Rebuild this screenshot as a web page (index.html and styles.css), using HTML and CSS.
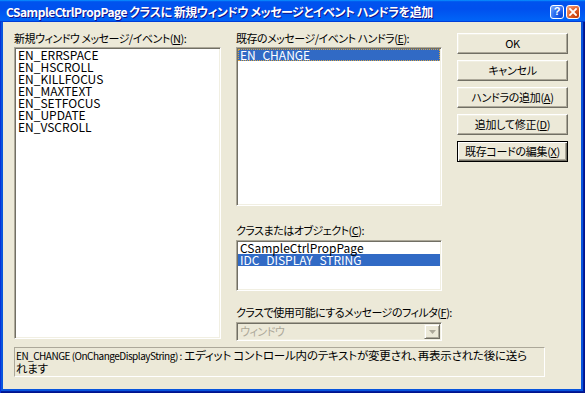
FILE: index.html
```html
<!DOCTYPE html>
<html lang="ja">
<head>
<meta charset="utf-8">
<title>CSampleCtrlPropPage</title>
<link rel="stylesheet" href="styles.css">
</head>
<body>
<div class="window">
  <div class="titlebar">
    <span class="title">CSampleCtrlPropPage クラスに 新規ウィンドウ メッセージとイベント ハンドラを追加</span>
    <div class="caption-buttons">
      <div class="cap-btn help">?</div>
      <div class="cap-btn close">
        <svg width="8" height="8" viewBox="0 0 8 8"><path d="M1 1 L7 7 M7 1 L1 7" stroke="#fff" stroke-width="1.8" stroke-linecap="square"/></svg>
      </div>
    </div>
  </div>
  <div class="client">
    <div class="main">
      <div class="col">
        <div class="label">新規ウィンドウ メッセージ/イベント(<u>N</u>):</div>
        <div class="listbox list-new">
          <div class="item">EN_ERRSPACE</div>
          <div class="item">EN_HSCROLL</div>
          <div class="item">EN_KILLFOCUS</div>
          <div class="item">EN_MAXTEXT</div>
          <div class="item">EN_SETFOCUS</div>
          <div class="item">EN_UPDATE</div>
          <div class="item">EN_VSCROLL</div>
        </div>
      </div>
      <div class="col">
        <div class="label">既存のメッセージ/イベント ハンドラ(<u>E</u>):</div>
        <div class="listbox list-existing">
          <div class="item selected focused">EN_CHANGE</div>
        </div>
        <div class="label label-class">クラスまたはオブジェクト(<u>C</u>):</div>
        <div class="listbox list-class">
          <div class="item">CSampleCtrlPropPage</div>
          <div class="item selected">IDC_DISPLAY_STRING</div>
        </div>
        <div class="label label-filter">クラスで使用可能にするメッセージのフィルタ(<u>F</u>):</div>
        <div class="combo">
          <span class="combo-text">ウィンドウ</span>
          <span class="combo-btn">
            <svg width="7" height="4" viewBox="0 0 7 4"><path d="M0 0 H7 L3.5 4 Z" fill="#aca899"/></svg>
          </span>
        </div>
      </div>
      <div class="col buttons">
        <div class="btn">OK</div>
        <div class="btn">キャンセル</div>
        <div class="btn">ハンドラの追加(<u>A</u>)</div>
        <div class="btn">追加して修正(<u>D</u>)</div>
        <div class="btn default">既存コードの編集(<u>X</u>)</div>
      </div>
    </div>
    <div class="status"><span class="status-code">EN_CHANGE (OnChangeDisplayString) :</span> エディット コントロール内のテキストが変更され、再表示された後に送ら<br>れます</div>
  </div>
</div>
</body>
</html>
```

FILE: styles.css
```css
* { box-sizing: border-box; }
html, body { margin: 0; padding: 0; }
body {
  width: 585px;
  height: 393px;
  overflow: hidden;
  font-family: "Noto Sans CJK JP", "Noto Sans", sans-serif;
  font-size: 12px;
  font-feature-settings: "palt";
  color: #000;
  background: #fff;
}
.window {
  width: 585px;
  height: 393px;
  display: flex;
  flex-direction: column;
  background: #0855dd;
  box-shadow: inset 1px 0 #0831d9, inset -1px -1px #00138c, inset -2px -2px #001ea0;
}
.titlebar {
  height: 22px;
  flex: none;
  display: flex;
  align-items: center;
  justify-content: space-between;
  padding: 0 5px 0 6px;
  background: linear-gradient(180deg, #0997ff, #0053ee 8%, #0050ee 40%, #0062f6 88%, #0062f6 93%, #005bff 95%, #003dd7 96%, #003dd7);
}
.title {
  color: #fff;
  font-weight: bold;
  font-size: 12px;
  letter-spacing: -0.5px;
  line-height: 16px;
  margin-top: 1px;
  white-space: nowrap;
  text-shadow: 1px 1px #0f1089;
}
.caption-buttons {
  display: flex;
  gap: 2px;
  margin-top: 1px;
}
.cap-btn {
  width: 14px;
  height: 14px;
  border: 1px solid #fff;
  border-radius: 3px;
  display: flex;
  align-items: center;
  justify-content: center;
  color: #fff;
  font-weight: bold;
  font-size: 11px;
  line-height: 1;
  font-family: "Liberation Sans", sans-serif;
}
.help {
  background: radial-gradient(circle at 85% 85%, #0a47d6 0%, #2a6cf2 50%, #83b1fb 100%);
}
.close {
  background: radial-gradient(circle at 85% 85%, #c23a05 0%, #e0602a 50%, #f4ad8d 100%);
}
.client {
  flex: 1;
  margin: 0 4px 4px 3px;
  background: #ece9d8;
  padding: 10px 13px 12px 11px;
  display: flex;
  flex-direction: column;
  gap: 6px;
}
.main {
  height: 309px;
  display: grid;
  grid-template-columns: 207px 206px 111px;
  column-gap: 15px;
}
.col {
  display: flex;
  flex-direction: column;
}
.label {
  font-size: 11px;
  letter-spacing: -0.5px;
  line-height: 13px;
  height: 13px;
  margin-bottom: 2px;
  white-space: nowrap;
}
.label u { text-underline-offset: 1px; }
.label-class { margin-top: 18px; margin-bottom: 3px; }
.label-filter { margin-top: 15px; margin-bottom: 3px; }
.listbox {
  background: #fff;
  border: 1px solid;
  border-color: #aca899 #fff #fff #aca899;
  box-shadow: inset 1px 1px #716f64, inset -1px -1px #f1efe2;
  padding: 1px;
  overflow: hidden;
}
.list-new { height: 292px; }
.list-existing { height: 159px; }
.list-class { height: 51px; }
.item {
  height: 12px;
  line-height: 12px;
  padding-left: 2px;
  white-space: nowrap;
}
.selected {
  background: #316ac5;
  color: #fff;
}
.focused {
  outline: 1px dotted #d9a441;
  outline-offset: -1px;
}
.combo {
  height: 19px;
  display: flex;
  align-items: stretch;
  background: #ece9d8;
  border: 1px solid;
  border-color: #aca899 #fff #fff #aca899;
  box-shadow: inset 1px 1px #716f64, inset -1px -1px #f1efe2;
  padding: 1px;
}
.combo-text {
  flex: 1;
  color: #aca899;
  font-size: 11px;
  letter-spacing: -0.5px;
  line-height: 15px;
  padding-left: 2px;
}
.combo-btn {
  width: 16px;
  display: flex;
  align-items: center;
  justify-content: center;
  background: #ece9d8;
  border: 1px solid;
  border-color: #f1efe2 #716f64 #716f64 #f1efe2;
  box-shadow: inset 1px 1px #fff, inset -1px -1px #aca899;
}
.buttons {
  padding-top: 1px;
  gap: 6px;
}
.btn {
  height: 21px;
  display: flex;
  align-items: center;
  justify-content: center;
  white-space: nowrap;
  background: #ece9d8;
  border: 1px solid;
  border-color: #fff #716f64 #716f64 #fff;
  box-shadow: inset -1px -1px #aca899, inset 1px 1px #f1efe2;
  font-size: 11px;
  letter-spacing: -0.3px;
  line-height: 13px;
}
.btn.default {
  border: 1px solid #000;
  box-shadow: inset 1px 1px #fff, inset -1px -1px #716f64, inset -2px -2px #aca899;
}
.status {
  width: 531px;
  height: 30px;
  border: 1px solid;
  border-color: #aca899 #fff #fff #aca899;
  font-size: 11.5px;
  letter-spacing: -0.2px;
  line-height: 12px;
  padding: 1px 0 0 1px;
  white-space: nowrap;
  overflow: hidden;
}
.status-code {
  font-size: 10px;
  letter-spacing: -0.5px;
}
```
